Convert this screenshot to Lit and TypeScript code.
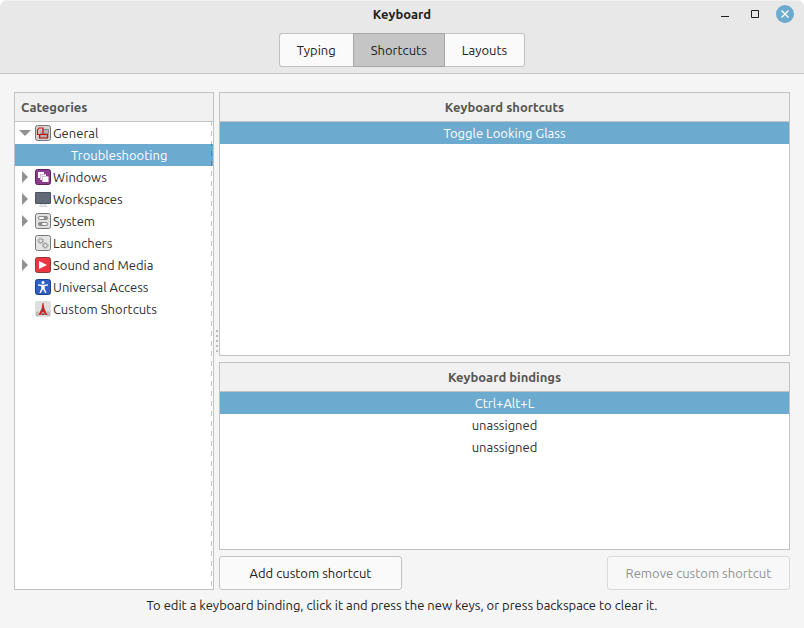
import { LitElement, html, svg, css, nothing } from "lit";
import { customElement, property, state } from "lit/decorators.js";
import { classMap } from "lit/directives/class-map.js";

const icons: Record<string, unknown> = {
  general: svg`
    <rect x="0.5" y="0.5" width="15" height="15" rx="2" fill="#d2d2d2" stroke="#777"/>
    <path d="M7.500 4.500h6v4h-6zM5 8.500h8v4.500H5z" fill="#b0b0b0" stroke="#8d8d8d"/>
    <path d="M2.500 5v4.500h5.500V3H4zM4.500 9.500V13h8V9.500H8" fill="none" stroke="#d40f16" stroke-width="1.200"/>
    <path d="M4.500 5h2v3h-2z" fill="#b4b4b4"/>`,
  windows: svg`
    <rect x="0.5" y="0.5" width="15" height="15" rx="2" fill="#8c3a8c" stroke="#5c1f60"/>
    <rect x="3" y="3" width="6" height="6" fill="#fff"/>
    <rect x="5" y="5" width="6" height="6" fill="#b98bb9"/>
    <rect x="5.500" y="5.500" width="5.500" height="5.500" fill="#f4f0f4"/>
    <rect x="7" y="7" width="6" height="6" fill="#b98bb9"/>
    <rect x="7.500" y="7.500" width="6" height="5.500" fill="#fff"/>`,
  workspaces: svg`
    <path d="M5.500 13h5l1 2.500h-7z" fill="#eef0f5" stroke="#c8ccd8" stroke-width="0.8"/>
    <rect x="0" y="1" width="16" height="12" rx="1" fill="#4d535f"/>
    <rect x="1" y="2" width="14" height="10" fill="#626a77"/>`,
  system: svg`
    <rect x="0.5" y="0.5" width="15" height="15" rx="2" fill="#e0e0e0" stroke="#777"/>
    <rect x="3" y="3" width="10" height="4" rx="2" fill="#8c8c8c"/>
    <rect x="4" y="4" width="5" height="2" rx="1" fill="#f6f6f6"/>
    <rect x="3" y="9" width="10" height="4" rx="2" fill="#8c8c8c"/>
    <rect x="7" y="10" width="5" height="2" rx="1" fill="#f6f6f6"/>`,
  launchers: svg`
    <rect x="0.5" y="0.5" width="15" height="15" rx="2" fill="#e4e4e4" stroke="#777"/>
    <circle cx="5.800" cy="5.800" r="2" fill="none" stroke="#949494" stroke-width="1"/>
    <circle cx="5.800" cy="5.800" r="2.900" fill="none" stroke="#949494" stroke-width="0.9" stroke-dasharray="1.100 1.180"/>
    <circle cx="10.300" cy="10.500" r="2" fill="none" stroke="#949494" stroke-width="1"/>
    <circle cx="10.300" cy="10.500" r="2.900" fill="none" stroke="#949494" stroke-width="0.9" stroke-dasharray="1.100 1.180"/>`,
  media: svg`
    <rect x="0.5" y="0.5" width="15" height="15" rx="2" fill="#ee3440" stroke="#8f3a35"/>
    <path d="M4 4l8 4-8 4z" fill="#fff"/>`,
  access: svg`
    <rect x="0.5" y="0.5" width="15" height="15" rx="2" fill="#2d5fc4" stroke="#1d3f88"/>
    <circle cx="8" cy="3.500" r="1.500" fill="#fff"/>
    <path d="M3 5.300l3.500.500h3L13 5.300v1.200l-3.300.700v2.300l1.800 4.200-1.300.400L8 10.200 5.800 14.100l-1.300-.400 1.800-4.200V7.200L3 6.500z" fill="#fff"/>`,
  custom: svg`
    <rect x="0" y="0" width="16" height="16" rx="2" fill="#dedede"/>
    <path d="M1 11l3-1v5H1zM12 10l3 1v4h-3z" fill="#bdbdbd"/>
    <path d="M7.500 2h1l.900 5.500L12.500 14H10l-1-2.500H7L6 14H3.500l3.100-6.500z" fill="#cc2a2a"/>
    <path d="M7.500 7h1v3h-1zM6.500 12.500h3v1.500h-3z" fill="#6f4040"/>`,
};

interface Category {
  name: string;
  icon?: string;
  expandable?: boolean;
  open?: boolean;
  child?: boolean;
}

const categories: Category[] = [
  { name: "General", icon: "general", expandable: true, open: true },
  { name: "Troubleshooting", child: true },
  { name: "Windows", icon: "windows", expandable: true },
  { name: "Workspaces", icon: "workspaces", expandable: true },
  { name: "System", icon: "system", expandable: true },
  { name: "Launchers", icon: "launchers" },
  { name: "Sound and Media", icon: "media", expandable: true },
  { name: "Universal Access", icon: "access" },
  { name: "Custom Shortcuts", icon: "custom" },
];

@customElement("window-header")
class WindowHeader extends LitElement {
  @state() tab = "Shortcuts";

  static styles = css`
    :host {
      display: block;
      background: #e8e8e8;
      border-bottom: 1px solid #c6c6c6;
      border-radius: 7px 7px 0 0;
      box-shadow: inset 0 1px #f0f0f0;
      color: #212121;
    }
    button {
      font: inherit;
      color: inherit;
      padding: 0;
      margin: 0;
    }
    .title {
      display: grid;
      grid-template-columns: 1fr auto 1fr;
      align-items: center;
      height: 28px;
      padding: 0 10px;
    }
    h1 {
      grid-column: 2;
      margin: 0;
      font-size: 13px;
      line-height: 20px;
      font-weight: 600;
    }
    .controls {
      display: flex;
      justify-content: flex-end;
      gap: 12px;
    }
    .control {
      width: 18px;
      height: 18px;
      border: 0;
      background: none;
    }
    .control svg {
      display: block;
    }
    .tabs {
      display: flex;
      justify-content: center;
      padding: 5px 0 6px;
    }
    .tab {
      box-sizing: border-box;
      height: 34px;
      padding: 0 17px;
      border: 1px solid #c2c2c2;
      background: #fafafa;
    }
    .tab:first-child {
      border-right: 0;
      border-radius: 3px 0 0 3px;
    }
    .tab:last-child {
      border-left: 0;
      border-radius: 0 3px 3px 0;
    }
    .tab.active {
      background: #c5c5c5;
      border-color: #a6a6a6;
    }
  `;

  render() {
    return html`
      <div class="title">
        <h1>Keyboard</h1>
        <div class="controls">
          <button class="control" aria-label="Minimize">
            <svg width="18" height="18"><path d="M5 11h8v1H5z" fill="#212121" /></svg>
          </button>
          <button class="control" aria-label="Maximize">
            <svg width="18" height="18">
              <path d="M5.500 5.500h7v7h-7z" fill="none" stroke="#212121" />
            </svg>
          </button>
          <button class="control" aria-label="Close">
            <svg width="18" height="18">
              <circle cx="9" cy="9" r="9" fill="#6caacf" />
              <path d="M5.500 5.500l7 7m0-7l-7 7" stroke="#fff" stroke-width="1.400" />
            </svg>
          </button>
        </div>
      </div>
      <div class="tabs" role="tablist">
        ${["Typing", "Shortcuts", "Layouts"].map(
          (t) => html`<button
            role="tab"
            class=${classMap({ tab: true, active: t === this.tab })}
            aria-selected=${t === this.tab}
            @click=${() => (this.tab = t)}
          >${t}</button>`
        )}
      </div>
    `;
  }
}

@customElement("category-tree")
class CategoryTree extends LitElement {
  @state() selected = "Troubleshooting";

  static styles = css`
    :host {
      display: block;
      position: relative;
      border: 1px solid #c2c2c2;
      background: #fff;
    }
    h2 {
      margin: 0;
      padding: 0 6px;
      font-size: 13px;
      line-height: 28px;
      font-weight: 700;
      color: #555;
      background: #f1f1f1;
      border-bottom: 1px solid #c2c2c2;
    }
    ul {
      list-style: none;
      margin: 0;
      padding: 0;
    }
    li {
      display: flex;
      align-items: center;
      height: 22px;
      padding-left: 4px;
      gap: 2px;
    }
    .child {
      padding-left: 56px;
    }
    .selected {
      background: #6caacf;
      color: #fff;
    }
    .arrow {
      width: 14px;
      height: 12px;
      fill: #919191;
    }
    .icon {
      width: 16px;
      height: 16px;
    }
    .ruler {
      position: absolute;
      top: 29px;
      bottom: 0;
      right: 1px;
      width: 1px;
      background: repeating-linear-gradient(
        rgba(0, 0, 0, 0.24) 0 4px,
        transparent 4px 9px,
        rgba(0, 0, 0, 0.24) 9px 10px
      );
    }
  `;

  render() {
    return html`
      <h2 id="heading">Categories</h2>
      <ul role="tree" aria-labelledby="heading">
        ${categories.map(
          (c) => html`<li
            role="treeitem"
            aria-level=${c.child ? 2 : 1}
            aria-selected=${c.name === this.selected}
            aria-expanded=${c.expandable ? String(!!c.open) : nothing}
            class=${classMap({ child: !!c.child, selected: c.name === this.selected })}
            @click=${() => (this.selected = c.name)}
          >
            ${c.child
              ? nothing
              : html`<svg class="arrow" viewBox="0 0 14 12">
                    ${c.expandable
                      ? svg`<path d=${c.open ? "M0 3h12l-6 6z" : "M3 0l6 6-6 6z"} />`
                      : nothing}
                  </svg>
                  <svg class="icon" viewBox="0 0 16 16">${icons[c.icon!]}</svg>`}
            <span>${c.name}</span>
          </li>`
        )}
      </ul>
      <div class="ruler"></div>
    `;
  }
}

@customElement("list-pane")
class ListPane extends LitElement {
  @property() heading = "";
  @property({ attribute: false }) rows: string[] = [];
  @state() selected = 0;

  static styles = css`
    :host {
      display: block;
      border: 1px solid #c2c2c2;
      background: #fff;
    }
    table {
      width: 100%;
      border-spacing: 0;
      text-align: center;
    }
    th {
      height: 28px;
      padding: 0;
      background: #f1f1f1;
      border-bottom: 1px solid #c2c2c2;
      color: #555;
      font-weight: 700;
    }
    td {
      height: 22px;
      padding: 0;
    }
    .selected {
      background: #6caacf;
      color: #fff;
    }
  `;

  render() {
    return html`<table>
      <thead>
        <tr><th scope="col">${this.heading}</th></tr>
      </thead>
      <tbody>
        ${this.rows.map(
          (r, i) => html`<tr
            class=${classMap({ selected: i === this.selected })}
            @click=${() => (this.selected = i)}
          ><td>${r}</td></tr>`
        )}
      </tbody>
    </table>`;
  }
}

@customElement("app-root")
class AppRoot extends LitElement {
  static styles = css`
    :host {
      display: flex;
      flex-direction: column;
      min-height: 100vh;
      box-sizing: border-box;
      background: linear-gradient(#fff 20px, #f5f5f5 20px);
      font: 13px/20px Ubuntu, "Noto Sans", sans-serif;
      color: #303030;
    }
    main {
      flex: 1;
      display: grid;
      grid-template-columns: 200px 5px minmax(0, 1fr);
      padding: 18px 14px 0;
    }
    .splitter {
      display: flex;
      flex-direction: column;
      align-items: center;
      justify-content: center;
      gap: 3px;
    }
    .dot {
      width: 2px;
      height: 2px;
      border-radius: 1px;
      background: #a8a8a8;
    }
    .panes {
      display: grid;
      grid-template-rows: 264fr 188fr auto;
      gap: 6px;
    }
    .actions {
      display: flex;
      justify-content: space-between;
    }
    .action {
      box-sizing: border-box;
      width: 183px;
      height: 34px;
      padding: 0;
      font: inherit;
      color: #212121;
      background: #fafafa;
      border: 1px solid #c2c2c2;
      border-radius: 3px;
    }
    .action:disabled {
      color: #929292;
      background: #f8f8f8;
      border-color: #dadada;
    }
    .hint {
      margin: 0;
      padding: 5px 14px 13px;
      text-align: center;
      color: #212121;
    }
  `;

  render() {
    return html`
      <window-header></window-header>
      <main>
        <category-tree></category-tree>
        <div class="splitter">
          ${[0, 1, 2, 3, 4].map(() => html`<span class="dot"></span>`)}
        </div>
        <div class="panes">
          <list-pane heading="Keyboard shortcuts" .rows=${["Toggle Looking Glass"]}></list-pane>
          <list-pane
            heading="Keyboard bindings"
            .rows=${["Ctrl+Alt+L", "unassigned", "unassigned"]}
          ></list-pane>
          <div class="actions">
            <button class="action">Add custom shortcut</button>
            <button class="action" disabled>Remove custom shortcut</button>
          </div>
        </div>
      </main>
      <p class="hint">
        To edit a keyboard binding, click it and press the new keys, or press backspace to clear it.
      </p>
    `;
  }
}
